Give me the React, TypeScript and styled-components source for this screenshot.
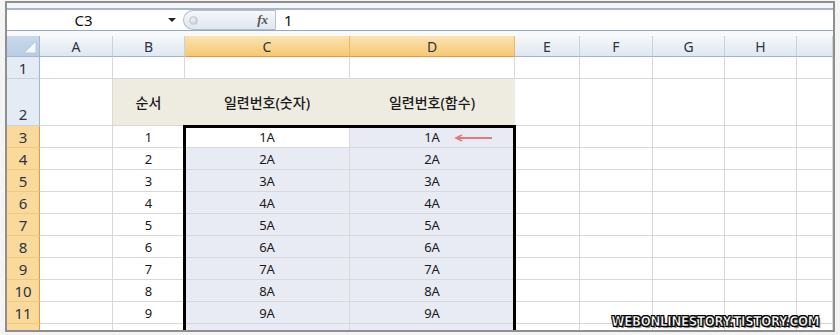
import React from 'react';
import styled, { createGlobalStyle, css } from 'styled-components';

const GlobalStyle = createGlobalStyle`
  html, body {
    margin: 0;
    padding: 0;
    background: #f4f4f4;
  }
  body {
    font-family: "Noto Sans", "Noto Sans CJK KR", sans-serif;
    color: #111;
  }
`;

const ROW_HEAD_W = 33;
const COL_HEAD_H = 21;

const COLUMNS = [
  { name: 'A', width: 73 },
  { name: 'B', width: 72 },
  { name: 'C', width: 165, selected: true },
  { name: 'D', width: 165, selected: true },
  { name: 'E', width: 65 },
  { name: 'F', width: 73 },
  { name: 'G', width: 72 },
  { name: 'H', width: 72 },
  { name: '', width: 36 },
];

type Row = { n: number; label: string; height: number; header?: boolean; selected?: boolean; idx?: number };

const ROWS: Row[] = [
  { n: 1, label: '1', height: 22 },
  { n: 2, label: '2', height: 47, header: true },
  ...Array.from({ length: 9 }, (_, i) => ({ n: i + 3, label: String(i + 3), height: 22, selected: true, idx: i + 1 })),
  // partly hidden by the window edge
  { n: 12, label: '', height: 22, selected: true },
];

// selection box C3:D12 in sheet pixels
const selLeft = ROW_HEAD_W + COLUMNS[0].width + COLUMNS[1].width;
const selWidth = COLUMNS[2].width + COLUMNS[3].width;
const selTop = COL_HEAD_H + ROWS[0].height + ROWS[1].height;

export default function App() {
  return (
    <>
      <GlobalStyle />
      <Frame>
        <TopStrip />
        <FormulaBar>
          <NameBox>
            <NameText>C3</NameText>
            <DropArrow />
          </NameBox>
          <FxPill>
            <Knob />
            <Fx>fx</Fx>
          </FxPill>
          <FormulaInput>1</FormulaInput>
        </FormulaBar>
        <GapStrip />
        <Sheet $cols={COLUMNS.map(c => c.width + 'px').join(' ')} $rows={ROWS.map(r => r.height + 'px').join(' ')}>
          <Corner>
            <svg width="14" height="14" viewBox="0 0 14 14">
              <polygon points="13,1 13,13 1,13" fill="#f4f7fb" stroke="#b9c8da" strokeWidth="1" />
            </svg>
          </Corner>
          {COLUMNS.map((c, i) => (
            <ColHeader key={'h' + i} $selected={!!c.selected}>{c.name}</ColHeader>
          ))}

          {ROWS.map(r => (
            <React.Fragment key={r.n}>
              <RowHeader $selected={!!r.selected} $tall={!!r.header}>{r.label}</RowHeader>
              {COLUMNS.map((c, ci) => {
                if (r.header && ci >= 1 && ci <= 3) {
                  return (
                    <TitleCell key={ci}>
                      {ci === 1 ? '순서' : ci === 2 ? '일련번호(숫자)' : '일련번호(함수)'}
                    </TitleCell>
                  );
                }
                if (r.idx) {
                  if (ci === 1) return <Cell key={ci} $center>{r.idx}</Cell>;
                  if (ci === 2)
                    return (
                      <Cell key={ci} $center $fill={r.n === 3 ? '#ffffff' : '#e9ebf4'}>
                        {r.idx}A
                      </Cell>
                    );
                  if (ci === 3)
                    return (
                      <Cell key={ci} $center $fill="#e9ebf4">
                        {r.idx}A
                        {r.n === 3 && (
                          <Arrow width="40" height="8" viewBox="0 0 40 8">
                            <line x1="3" y1="4" x2="38" y2="4" stroke="#e57878" strokeWidth="2" />
                            <polyline points="8,1 2,4 8,7" fill="none" stroke="#e57878" strokeWidth="1.6" />
                          </Arrow>
                        )}
                      </Cell>
                    );
                }
                if (r.n === 12 && (ci === 2 || ci === 3)) return <Cell key={ci} $fill="#e9ebf4" />;
                return <Cell key={ci} />;
              })}
            </React.Fragment>
          ))}
          <SelectionBox style={{ left: selLeft - 2, top: selTop - 1, width: selWidth + 3 }} />
        </Sheet>
        <Watermark>WEBONLINESTORY.TISTORY.COM</Watermark>
      </Frame>
    </>
  );
}

const Frame = styled.div`
  position: relative;
  box-sizing: border-box;
  width: 830px;
  height: 331px;
  margin: 1px 0 0 5px;
  border: 2px solid #8f8f8f;
  background: #ffffff;
  display: flex;
  flex-direction: column;
  overflow: hidden;
`;

const TopStrip = styled.div`
  height: 5px;
  flex: none;
  background: #f3f5f8;
`;

const GapStrip = styled.div`
  height: 5px;
  flex: none;
  background: #f7f9fb;
`;

const FormulaBar = styled.div`
  box-sizing: border-box;
  height: 23px;
  flex: none;
  display: flex;
  align-items: stretch;
  border-top: 2px solid #a7b5c6;
  border-bottom: 1px solid #98a8ba;
  background: #fff;
`;

const NameBox = styled.div`
  width: 175px;
  display: flex;
  align-items: center;
`;

const NameText = styled.span`
  flex: 1;
  text-align: center;
  font-size: 15px;
  color: #111;
  padding-right: 8px;
`;

const DropArrow = styled.span`
  width: 0;
  height: 0;
  margin-right: 6px;
  border-left: 4px solid transparent;
  border-right: 4px solid transparent;
  border-top: 4px solid #222;
`;

const FxPill = styled.div`
  width: 93px;
  margin-left: 1px;
  display: flex;
  align-items: center;
  justify-content: space-between;
  border-radius: 11px 0 0 11px;
  border: 1px solid #aebccb;
  border-right: 1px solid #b8c4d0;
  background: linear-gradient(#f6f8fb, #dfe6ef);
  padding: 0 7px 0 5px;
  box-sizing: border-box;
`;

const Knob = styled.span`
  width: 7px;
  height: 7px;
  border-radius: 50%;
  background: radial-gradient(circle at 40% 40%, #f4f4f4, #b9bfc7);
  border: 1px solid #c6ccd3;
`;

const Fx = styled.span`
  font-family: "Liberation Serif", "DejaVu Serif", serif;
  font-style: italic;
  font-weight: bold;
  font-size: 13px;
  color: #555;
`;

const FormulaInput = styled.div`
  flex: 1;
  display: flex;
  align-items: center;
  padding-left: 8px;
  font-size: 15px;
  color: #111;
`;

const Sheet = styled.div<{ $cols: string; $rows: string }>`
  display: grid;
  grid-template-columns: ${ROW_HEAD_W}px ${p => p.$cols};
  grid-template-rows: ${COL_HEAD_H}px ${p => p.$rows};
  position: relative;
`;

const headerBase = css`
  box-sizing: border-box;
  display: flex;
  justify-content: center;
  font-size: 14px;
  color: #2c3440;
`;

const Corner = styled.div`
  box-sizing: border-box;
  display: flex;
  align-items: flex-end;
  justify-content: flex-end;
  padding: 0 2px 2px 0;
  background: linear-gradient(#c9d8ec, #b9cce4);
  border-right: 1px solid #9eb6ce;
  border-bottom: 1px solid #9eb6ce;
`;

const ColHeader = styled.div<{ $selected: boolean }>`
  ${headerBase};
  align-items: center;
  border-right: 1px solid ${p => (p.$selected ? '#f0b75e' : '#c5d2e0')};
  border-bottom: 1px solid ${p => (p.$selected ? '#f29436' : '#9eb6ce')};
  background: ${p =>
    p.$selected ? 'linear-gradient(#fbe3b2, #f6c873)' : 'linear-gradient(#f5f8fb, #dfe7f0)'};
`;

const RowHeader = styled.div<{ $selected: boolean; $tall: boolean }>`
  ${headerBase};
  align-items: ${p => (p.$tall ? 'flex-end' : 'center')};
  padding-bottom: ${p => (p.$tall ? '1px' : '0')};
  font-size: 15px;
  border-right: 1px solid ${p => (p.$selected ? '#f29436' : '#9eb6ce')};
  border-bottom: 1px solid ${p => (p.$selected ? '#f5c77a' : '#c5d2e0')};
  background: ${p => (p.$selected ? '#f9d99c' : '#e4ebf4')};
`;

const Cell = styled.div<{ $fill?: string; $center?: boolean }>`
  box-sizing: border-box;
  position: relative;
  display: flex;
  align-items: center;
  justify-content: ${p => (p.$center ? 'center' : 'flex-start')};
  font-size: 13px;
  color: #1a1a1a;
  background: ${p => p.$fill || '#ffffff'};
  border-right: 1px solid #d8d8d8;
  border-bottom: 1px solid #d8d8d8;
`;

const TitleCell = styled(Cell)`
  justify-content: center;
  font-size: 14px;
  font-weight: 500;
  background: #eeece1;
  border-right-color: #eeece1;
  border-bottom-color: #d8d8d8;
`;

const Arrow = styled.svg`
  position: absolute;
  left: 104px;
  top: 8px;
`;

const SelectionBox = styled.div`
  position: absolute;
  box-sizing: border-box;
  bottom: -10px;
  border: 3px solid #000;
  pointer-events: none;
  z-index: 2;
`;

const Watermark = styled.div`
  position: absolute;
  right: 14px;
  bottom: 1px;
  font-family: "DejaVu Sans", "Liberation Sans", sans-serif;
  font-weight: bold;
  font-size: 14px;
  letter-spacing: -0.3px;
  color: #ffffff;
  transform: scaleX(0.84);
  transform-origin: right bottom;
  -webkit-text-stroke: 0.6px #000;
  text-shadow: 1px 1px 0 #000, -1px -1px 0 #000, 1px -1px 0 #000, -1px 1px 0 #000, 2px 2px 1px #777;
  z-index: 3;
`;
